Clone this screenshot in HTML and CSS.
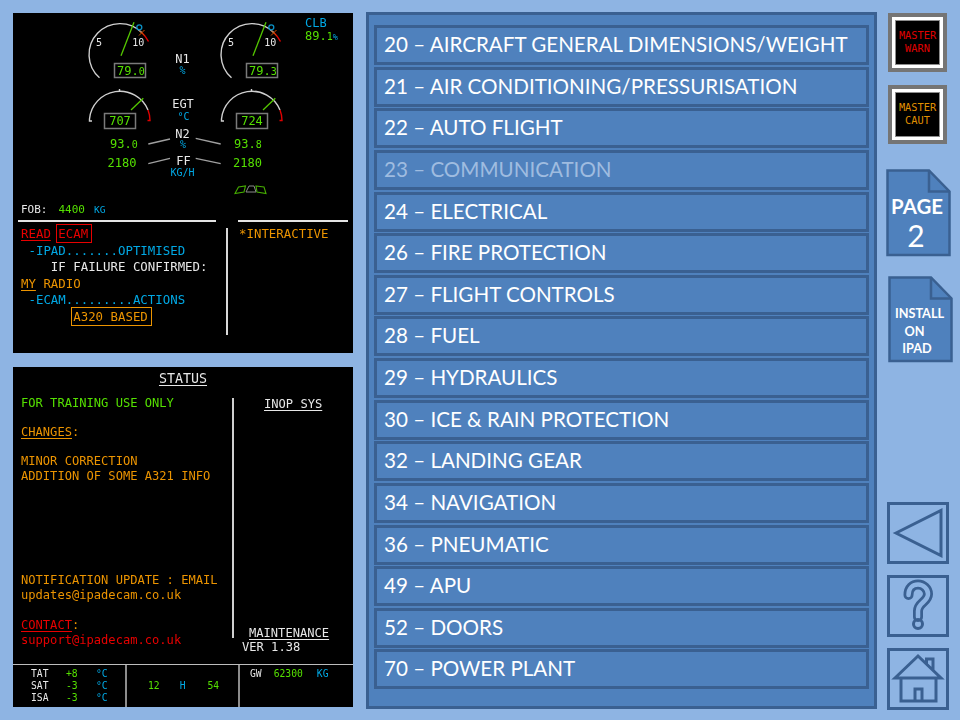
FILE: index.html
```html
<!DOCTYPE html>
<html lang="en">
<head>
<meta charset="utf-8">
<title>iPad ECAM</title>
<link rel="stylesheet" href="styles.css">
</head>
<body>
<div class="app">
  <div class="screens">
    <section class="screen">
      <svg class="gauges" width="340" height="190" viewBox="0 0 340 190">
        <defs>
          <g id="n1">
            <path class="arc" d="M86.5 64.8A31 31 0 1 1 129 19.7"/>
            <path class="arc-red" d="M129 19.7A31 31 0 0 1 135.5 28.5"/>
            <path class="tick-am" d="M126 22.5l5.5-5.5M126 17.5l5.5 5"/>
            <circle class="ring-b" cx="126.3" cy="14.3" r="2.5"/>
            <path class="needle" d="M108 42.7L121 9.3"/>
            <text class="t10 fw" x="86" y="32.5" text-anchor="middle">5</text>
            <text class="t10 fw" x="125.3" y="32.5" text-anchor="middle">10</text>
            <rect class="box" x="101.5" y="50.5" width="31" height="14"/>
          </g>
          <g id="egt">
            <path class="arc" d="M79 108H76.5V106A30.5 30.5 0 0 1 135 97"/>
            <path class="arc-red" d="M135 97Q137 102 137 107.5H134.5"/>
            <path class="arc" d="M106.5 76V79"/>
            <path class="needle" d="M118 97L130.3 85.3"/>
            <rect class="box" x="91.5" y="100.5" width="31" height="15"/>
          </g>
        </defs>
        <use href="#n1"/>
        <use href="#n1" x="132"/>
        <use href="#egt"/>
        <use href="#egt" x="132"/>
        <text class="t12 fg" x="104" y="62">79.<tspan class="t10">0</tspan></text>
        <text class="t12 fg" x="236" y="62">79.<tspan class="t10">3</tspan></text>
        <text class="t12 fg" x="107" y="112" text-anchor="middle">707</text>
        <text class="t12 fg" x="239" y="112" text-anchor="middle">724</text>
        <text class="t12 fw" x="169.5" y="50" text-anchor="middle">N1</text>
        <text class="t10 fb" x="169.5" y="60.5" text-anchor="middle">%</text>
        <text class="t12 fw" x="170" y="94.5" text-anchor="middle">EGT</text>
        <text class="t10 fb" x="170.5" y="106.5" text-anchor="middle">°C</text>
        <text class="t12 fw" x="169.5" y="125" text-anchor="middle">N2</text>
        <text class="t10 fb" x="170" y="135" text-anchor="middle">%</text>
        <text class="t12 fw" x="170.5" y="151.5" text-anchor="middle">FF</text>
        <text class="t10 fb" x="169.5" y="163" text-anchor="middle">KG/H</text>
        <text class="t12 fg" x="97" y="135">93.<tspan class="t10">0</tspan></text>
        <text class="t12 fg" x="221" y="135">93.<tspan class="t10">8</tspan></text>
        <text class="t12 fg" x="109" y="154" text-anchor="middle">2180</text>
        <text class="t12 fg" x="234.5" y="154" text-anchor="middle">2180</text>
        <path class="thin" d="M135.3 131L157 126M182.7 125.3L207.7 131M135.3 150.7L157 145.3M182.7 145.3L207.7 150.7"/>
        <path class="flap" d="M222 180.5L225.5 174L232.5 173L231 179ZM243 173L251 174L253 180.5L244 179Z"/>
        <path class="flap-mid" d="M233 179L236 173H241L243 179Z"/>
        <text class="t12 fb" x="292" y="13.5">CLB</text>
        <text class="t12 fg" x="292" y="27">89.<tspan class="t10">1</tspan><tspan class="t9 fb">%</tspan></text>
      </svg>
      <div class="fob"><span class="w">FOB:</span><span class="g fob-val">4400</span><span class="b fob-unit">KG</span></div>
      <div class="rules"><span class="rule-l"></span><span class="rule-r"></span></div>
      <div class="memo">
        <div class="memo-text">
          <span class="line r"><u>READ</u> <span class="boxed">ECAM</span></span>
          <span class="line b"> -IPAD.......OPTIMISED</span>
          <span class="line w">    IF FAILURE CONFIRMED:</span>
          <span class="line a"><u>MY</u> RADIO</span>
          <span class="line b"> -ECAM.........ACTIONS</span>
          <span class="line a">       <span class="boxed">A320 BASED</span></span>
        </div>
        <div class="vline"></div>
        <div class="memo-side a">*INTERACTIVE</div>
      </div>
    </section>

    <section class="screen status">
      <h1 class="status-title"><u>STATUS</u></h1>
      <div class="status-main">
        <div class="status-text">
          <p class="g">FOR TRAINING USE ONLY</p>
          <p>&nbsp;</p>
          <p class="a"><u>CHANGES</u>:</p>
          <p>&nbsp;</p>
          <p class="a">MINOR CORRECTION</p>
          <p class="a">ADDITION OF SOME A321 INFO</p>
          <p class="spacer"></p>
          <p class="a tail">NOTIFICATION UPDATE : EMAIL</p>
          <p class="a tail">updates@ipadecam.co.uk</p>
          <p class="tail">&nbsp;</p>
          <p class="r tail"><u>CONTACT</u><span class="a">:</span></p>
          <p class="r tail">support@ipadecam.co.uk</p>
        </div>
        <div class="vline2"></div>
        <div class="status-side">
          <p class="inop w"><u>INOP SYS</u></p>
          <p class="maint w"><u>MAINTENANCE</u></p>
          <p class="ver w">VER 1.38</p>
        </div>
      </div>
      <div class="strip">
        <div class="cell temps">
          <span class="w">TAT</span><span class="g">+8</span><span class="b">°C</span>
          <span class="w">SAT</span><span class="g">-3</span><span class="b">°C</span>
          <span class="w">ISA</span><span class="g">-3</span><span class="b">°C</span>
        </div>
        <div class="cell time"><span class="g">12</span><span class="b">H</span><span class="g">54</span></div>
        <div class="cell weight"><span class="w">GW</span><span class="g">62300</span><span class="b">KG</span></div>
      </div>
    </section>
  </div>

  <nav class="chapters">
    <div class="chapter">20 – AIRCRAFT GENERAL DIMENSIONS/WEIGHT</div>
    <div class="chapter">21 – AIR CONDITIONING/PRESSURISATION</div>
    <div class="chapter">22 – AUTO FLIGHT</div>
    <div class="chapter dim">23 – COMMUNICATION</div>
    <div class="chapter">24 – ELECTRICAL</div>
    <div class="chapter">26 – FIRE PROTECTION</div>
    <div class="chapter">27 – FLIGHT CONTROLS</div>
    <div class="chapter">28 – FUEL</div>
    <div class="chapter">29 – HYDRAULICS</div>
    <div class="chapter">30 – ICE &amp; RAIN PROTECTION</div>
    <div class="chapter">32 – LANDING GEAR</div>
    <div class="chapter">34 – NAVIGATION</div>
    <div class="chapter">36 – PNEUMATIC</div>
    <div class="chapter">49 – APU</div>
    <div class="chapter">52 – DOORS</div>
    <div class="chapter">70 – POWER PLANT</div>
  </nav>

  <aside class="tools">
    <div class="master warn"><span>MASTER<br>WARN</span></div>
    <div class="master caut"><span>MASTER<br>CAUT</span></div>
    <svg class="doc doc-page" width="66" height="88" viewBox="0 0 66 88">
      <path class="doc-body" d="M1.5 1.5H43L63.5 22.500V86H1.5Z"/>
      <path class="doc-fold" d="M43 1.500V22.500H63.500"/>
      <text class="doc-t1" x="31" y="45" text-anchor="middle">PAGE</text>
      <text class="doc-t2" x="30" y="78" text-anchor="middle">2</text>
    </svg>
    <svg class="doc doc-install" width="66" height="88" viewBox="0 0 66 88">
      <path class="doc-body" d="M1.5 1.500H43L63.500 22.500V85H1.500Z"/>
      <path class="doc-fold" d="M43 1.500V22.500H63.500"/>
      <text class="doc-t3" x="31.500" y="42" text-anchor="middle">INSTALL</text>
      <text class="doc-t3" x="26.500" y="59.500" text-anchor="middle">ON</text>
      <text class="doc-t3" x="29" y="77" text-anchor="middle">IPAD</text>
    </svg>
    <div class="nav-group">
      <svg class="nav" width="62" height="62" viewBox="0 0 62 62">
        <rect class="ico" x="1.500" y="1.500" width="59" height="59"/>
        <path class="ico" d="M9 31L54 8.500V53.500Z"/>
      </svg>
      <svg class="nav" width="62" height="62" viewBox="0 0 62 62">
        <rect class="ico" x="1.500" y="1.500" width="59" height="59"/>
        <path class="q-o" d="M21.500 20C21.500 13 26 9.500 31 9.500C36.500 9.500 41 14 41 19C41 27 31 27.500 31 36V42"/>
        <path class="q-i" d="M21.500 20C21.500 13 26 9.500 31 9.500C36.500 9.500 41 14 41 19C41 27 31 27.500 31 36V42"/>
        <circle class="ico" cx="31" cy="49" r="4.500"/>
      </svg>
      <svg class="nav" width="62" height="62" viewBox="0 0 62 62">
        <rect class="ico" x="1.500" y="1.500" width="59" height="59"/>
        <path class="ico" d="M8 30L31 8L54 30ZM39.500 16V11H46V23"/>
        <path class="ico" d="M14 30V53H49V30M28 53V41H35V53"/>
      </svg>
    </div>
  </aside>
</div>
</body>
</html>
```
FILE: styles.css
```css
* { box-sizing: border-box; }
html, body { margin: 0; padding: 0; }
body { width: 960px; height: 720px; overflow: hidden; background: #8eb4e3; }
p, h1 { margin: 0; font: inherit; }
u { text-underline-offset: 2px; text-decoration-thickness: 1px; }

.app { display: flex; width: 960px; height: 720px; padding: 12px 0 0 13px; align-items: flex-start; }

/* ECAM screens */
.screens { display: flex; flex-direction: column; gap: 14px; width: 340px; margin-top: 1px; }
.screen { width: 340px; height: 340px; background: #000; font-family: "DejaVu Sans Mono", monospace; color: #ddd; overflow: hidden; filter: blur(0.3px); }
.gauges { display: block; }
.w { color: #e8e8e8; }
.g { color: #55e000; }
.b { color: #00a8e4; }
.a { color: #ec9400; }
.r { color: #e80000; }

.t9 { font-size: 8.5px; }
.t10 { font-size: 10px; }
.t12 { font-size: 12px; }
.gauges text { font-family: "DejaVu Sans Mono", monospace; }
.fg { fill: #55e000; }
.fb { fill: #00a8e4; }
.fw { fill: #e8e8e8; }
.arc, .arc-red, .needle, .box, .thin, .tick-am, .ring-b, .flap, .flap-mid { fill: none; }
.arc { stroke: #d0d0d0; stroke-width: 1.400; }
.arc-red { stroke: #e00000; stroke-width: 1.400; }
.needle { stroke: #55c800; stroke-width: 1.300; }
.box { stroke: #7a7a7a; stroke-width: 1.500; }
.thin { stroke: #a0a0a0; stroke-width: 1.300; }
.tick-am { stroke: #d05000; stroke-width: 1; }
.ring-b { stroke: #0a90c4; stroke-width: 1.300; }
.flap { stroke: #45ac00; stroke-width: 1.100; }
.flap-mid { stroke: #8a8a8a; stroke-width: 1; }

.fob { display: flex; height: 14px; padding-left: 8px; font-size: 11px; line-height: 14px; margin-top: 0; }
.fob-val { margin-left: 11px; }
.fob-unit { margin-left: 9px; font-size: 9.500px; }
.rules { display: flex; gap: 22px; padding-left: 5px; margin-top: 3px; }
.rule-l, .rule-r { display: block; height: 2px; background: #e4e4e4; }
.rule-l { width: 198px; }
.rule-r { width: 110px; }
.memo { display: grid; grid-template-columns: 213px 2px 1fr; margin-top: 4px; }
.memo-text { padding-left: 8px; font-size: 12.400px; line-height: 16.600px; }
.memo-text .line { display: block; height: 16.600px; white-space: pre; }
.boxed { outline: 1px solid currentColor; outline-offset: 1px; padding: 0 2px 0 0; }
.vline { margin-top: 2px; height: 107px; background: #d8d8d8; }
.memo-side { padding-left: 11px; font-size: 12.400px; line-height: 16.600px; }

/* status */
.status { display: flex; flex-direction: column; font-size: 12.100px; }
.status-title { height: 23px; text-align: center; font-size: 13.300px; line-height: 23px; font-weight: 400; color: #e8e8e8; }
.status-main { display: grid; grid-template-columns: 219px 2px 1fr; height: 274px; }
.status-text { display: flex; flex-direction: column; padding: 6px 0 0 8px; line-height: 14.600px; white-space: pre; }
.spacer { flex: 0 0 89px; }
.tail { line-height: 15px; }
.vline2 { margin-top: 8px; height: 240px; background: #cfcfcf; }
.status-side { display: flex; flex-direction: column; line-height: 14px; }
.inop { margin: 7px 0 0 30px; }
.maint { margin: 215px 0 0 15px; }
.ver { margin: 0 0 0 8px; }
.strip { display: grid; grid-template-columns: 112px 113px 1fr; height: 43px; border-top: 1px solid #bdbdbd; font-size: 9.700px; line-height: 11.800px; }
.cell + .cell { border-left: 2px solid #8c8c8c; }
.temps { display: grid; grid-template-columns: 35px 30px auto; align-content: start; padding: 3px 0 0 18px; }
.time { display: flex; align-items: center; padding: 0 0 1px 21px; }
.time .b { margin: 0 0 0 20px; }
.time .b + .g { margin-left: 22px; }
.weight { display: flex; padding: 3px 0 0 10px; }
.weight .g { margin-left: 12px; }
.weight .b { margin-left: 14px; }

/* chapter list */
.chapters { display: flex; flex-direction: column; gap: 1.640px; width: 511px; height: 697px; margin-left: 13px; padding: 10px 5px 0 5px; background: #4f81bd; border: 3px solid #3a6091; }
.chapter { height: 40px; border: 3px solid #3a6091; padding-left: 7px; font-family: Lato, "Open Sans", sans-serif; font-size: 20.600px; line-height: 33.500px; color: #fff; white-space: nowrap; }
.chapter.dim { color: #9fbce0; }

/* right column */
.tools { display: flex; flex-direction: column; width: 72px; margin-left: 9px; }
.master { display: flex; align-items: center; justify-content: center; width: 59px; height: 59px; margin: 1px 0 0 2px; border: 4px solid #757575; background: #fff; font-family: "DejaVu Sans Mono", monospace; font-size: 10.300px; line-height: 12.700px; text-align: center; }
.master span { display: flex; align-items: center; justify-content: center; width: 45px; height: 45px; padding-bottom: 2px; background: #000; border: 1px solid #8c8c8c; }
.warn { color: #e00000; }
.caut { margin-top: 13px; color: #e09000; }
.doc { display: block; }
.doc-page { margin-top: 25px; }
.doc-install { margin: 19px 0 0 2px; }
.doc-body { fill: #4f81bd; stroke: #3a6091; stroke-width: 2.500; }
.doc-fold { fill: none; stroke: #3a6091; stroke-width: 2.500; }
.doc-t1, .doc-t2, .doc-t3 { font-family: Lato, "Open Sans", sans-serif; fill: #fff; }
.doc-t1 { font-size: 20.400px; font-weight: 700; }
.doc-t2 { font-size: 30px; font-weight: 400; }
.doc-t3 { font-size: 12.700px; font-weight: 700; }
.nav-group { display: flex; flex-direction: column; gap: 11px; margin: 138px 0 0 1px; }
.nav { display: block; }
.ico { fill: none; stroke: #3a6091; stroke-width: 3; stroke-linejoin: miter; }
.q-o { fill: none; stroke: #3a6091; stroke-width: 10; stroke-linecap: round; }
.q-i { fill: none; stroke: #8eb4e3; stroke-width: 4.500; stroke-linecap: round; }
```
